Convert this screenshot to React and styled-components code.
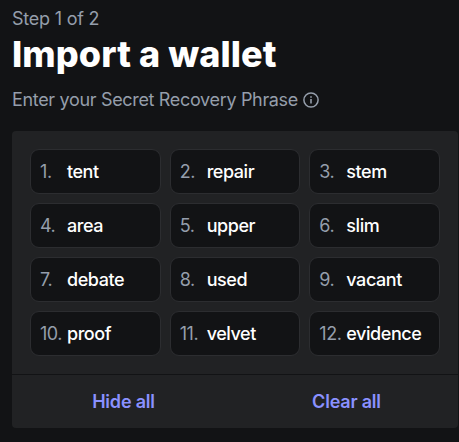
import styled, { createGlobalStyle } from "styled-components";

const GlobalStyle = createGlobalStyle`
  * {
    box-sizing: border-box;
  }

  body {
    margin: 0;
    background: #121315;
    color: #fff;
    font-family: Inter, "Liberation Sans", sans-serif;
    overflow: hidden;
  }
`;

const Page = styled.main`
  display: flex;
  flex-direction: column;
  width: 458px;
  padding: 8px 0 0 12px;
`;

const Step = styled.p`
  margin: 0;
  color: #959eab;
  font-size: 18px;
  line-height: 22px;
  letter-spacing: -0.22px;
`;

const Title = styled.h1`
  margin: 3px 0 0;
  font-size: 36px;
  font-weight: 800;
  line-height: 42px;
  letter-spacing: 0.08px;
  white-space: nowrap;
`;

const Subtitle = styled.p`
  display: flex;
  align-items: center;
  gap: 5px;
  margin: 14px 0 0;
  color: #959eab;
  font-size: 18px;
  line-height: 22px;
  letter-spacing: -0.33px;
  white-space: nowrap;
`;

const Panel = styled.section`
  margin-top: 20px;
  border-radius: 4px;
  background: #212224;
`;

const Words = styled.ol`
  display: grid;
  grid-template-columns: repeat(3, 1fr);
  gap: 9px;
  margin: 0;
  padding: 18px;
  list-style: none;
`;

const Word = styled.li`
  display: flex;
  align-items: center;
  height: 45px;
  padding-left: 9px;
  border: 1px solid #2c2d30;
  border-radius: 9px;
  background: #121315;
  font-size: 18px;
  font-weight: 500;
  letter-spacing: -0.45px;
  white-space: nowrap;
`;

const Index = styled.span`
  flex: 0 0 27px;
  color: #959eab;
  font-weight: 400;
`;

const Actions = styled.div`
  display: grid;
  grid-template-columns: 1fr 1fr;
  height: 54px;
  border-top: 1px solid #121315;
`;

const Action = styled.button`
  padding: 0;
  border: 0;
  background: none;
  color: #8a91ff;
  font: inherit;
  font-size: 18px;
  font-weight: 600;
  letter-spacing: -0.2px;
`;

const InfoIcon = () => (
  <svg width="16" height="16" viewBox="0 0 16 16" fill="none">
    <circle cx="8" cy="8" r="7.1" stroke="currentColor" strokeWidth="1.5" />
    <path d="M8 7v4.5M8 4.2v1.5" stroke="currentColor" strokeWidth="1.6" />
  </svg>
);

const words = [
  "tent",
  "repair",
  "stem",
  "area",
  "upper",
  "slim",
  "debate",
  "used",
  "vacant",
  "proof",
  "velvet",
  "evidence",
];

const App = () => {
  return (
    <>
      <GlobalStyle />
      <Page>
        <Step>Step 1 of 2</Step>
        <Title>Import a wallet</Title>
        <Subtitle>
          <span>Enter your Secret Recovery Phrase</span>
          <InfoIcon />
        </Subtitle>
        <Panel>
          <Words>
            {words.map((word, i) => (
              <Word key={word}>
                <Index>{i + 1}.</Index>
                {word}
              </Word>
            ))}
          </Words>
          <Actions>
            <Action>Hide all</Action>
            <Action>Clear all</Action>
          </Actions>
        </Panel>
      </Page>
    </>
  );
};

export default App;
